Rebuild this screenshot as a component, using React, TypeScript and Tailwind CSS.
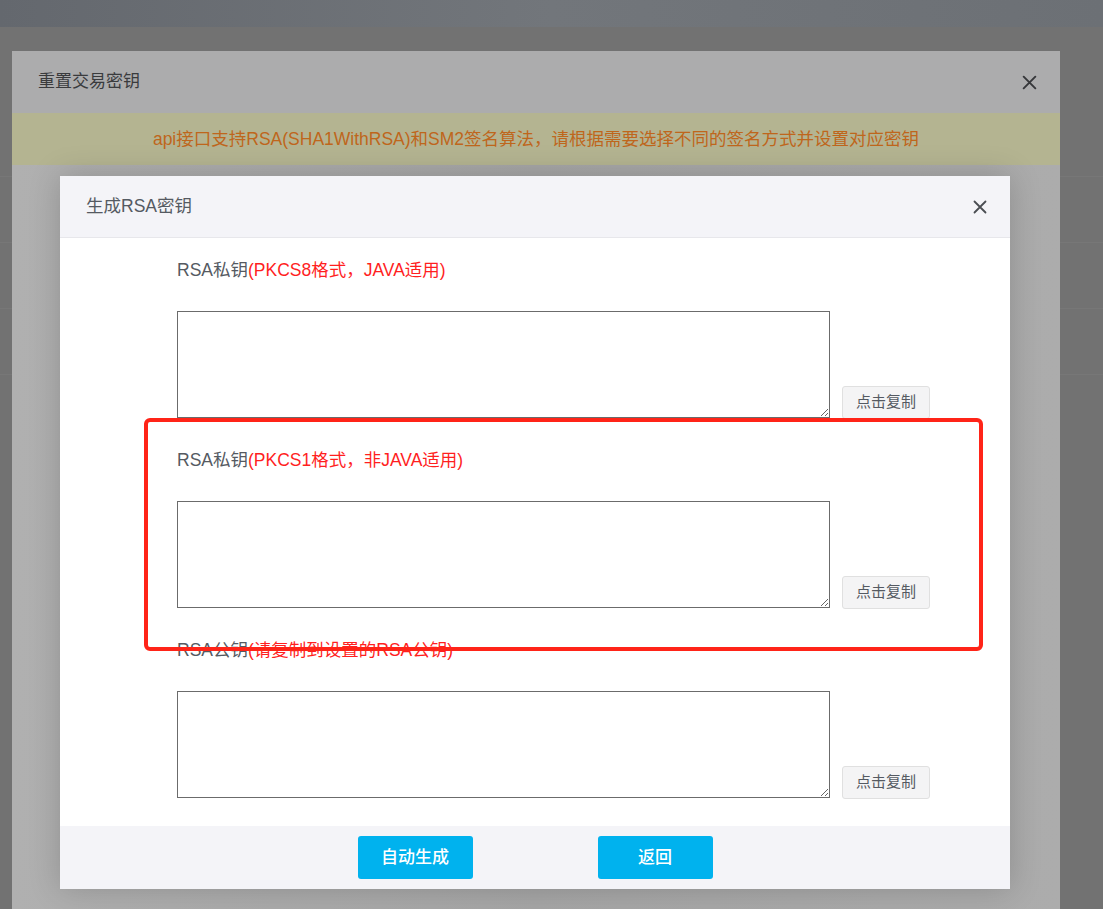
import React from "react";

const FONT = { fontFamily: '"Liberation Sans", "Noto Sans CJK SC", sans-serif' };

function CloseIcon({ className }: { className?: string }) {
  return (
    <svg viewBox="0 0 16 16" className={className} fill="none" stroke="currentColor" strokeWidth="1.8" strokeLinecap="round">
      <path d="M2.5 2.5l11 11M13.5 2.5l-11 11" />
    </svg>
  );
}

interface KeySectionProps {
  label: string;
  hint: string;
  first?: boolean;
}

function KeySection({ label, hint, first }: KeySectionProps) {
  return (
    <div className={first ? "" : "mt-[30px]"}>
      <div className="h-[24px] text-[17.5px] leading-[24px] text-[#555a62]">
        {label}
        <span className="text-[#ff1f1f]">{hint}</span>
      </div>
      <div className="mt-[29px] flex items-end gap-[12px]">
        <textarea className="block h-[107px] w-[653px] border border-[#6b6b6b] bg-white outline-none" />
        <button className="mb-[-1px] h-[33px] w-[88px] rounded-[3px] border border-[#e0e0e0] bg-[#f4f4f5] text-[15px] text-[#555a62]">
          点击复制
        </button>
      </div>
    </div>
  );
}

export default function App() {
  return (
    <div className="relative h-[909px] w-[1103px] overflow-hidden bg-[#727272]" style={FONT}>
      {/* page behind the mask */}
      <div className="h-[27px] bg-gradient-to-r from-[#64686e] via-[#72767b] to-[#6c7075]" />
      <div className="flex flex-col">
        <div className="h-[150px] border-b border-[#777777]" />
        <div className="h-[66px] border-b border-[#777777]" />
        <div className="h-[66px] border-b border-[#777777]" />
        <div className="h-[66px] border-b border-[#777777]" />
      </div>

      {/* outer dialog (dimmed) */}
      <div className="absolute left-[12px] top-[51px] flex h-[880px] w-[1048px] flex-col bg-gradient-to-b from-[#acacad] to-[#a4a4a4]">
        <div className="flex h-[62px] shrink-0 items-center justify-between bg-[#acacad] pl-[26px] pr-[22px]">
          <span className="text-[17px] text-[#3a3b3d]">重置交易密钥</span>
          <CloseIcon className="h-[17px] w-[17px] text-[#36373a]" />
        </div>
        <div className="flex h-[52px] shrink-0 items-center justify-center bg-[#b4b491] text-[17.5px] text-[#bf661c]">
          api接口支持RSA(SHA1WithRSA)和SM2签名算法，请根据需要选择不同的签名方式并设置对应密钥
        </div>
        <div className="flex-1 bg-gradient-to-r from-[#b0b0b0] via-[#a6a6a6] to-[#acacac]" />
      </div>

      {/* inner dialog */}
      <div className="absolute left-[60px] top-[176px] w-[950px] shadow-[0_0_30px_rgba(0,0,0,0.18)]">
        <div className="flex h-[62px] items-center justify-between border-b border-[#e7e7eb] bg-[#f4f4f8] pl-[26px] pr-[22px]">
          <span className="text-[17.5px] text-[#555a62]">生成RSA密钥</span>
          <CloseIcon className="h-[16px] w-[16px] text-[#4a4d52]" />
        </div>
        <div className="bg-white pb-[28px] pl-[117px] pt-[20px]">
          <KeySection first label="RSA私钥" hint="(PKCS8格式，JAVA适用)" />
          <KeySection label="RSA私钥" hint="(PKCS1格式，非JAVA适用)" />
          <KeySection label="RSA公钥" hint="(请复制到设置的RSA公钥)" />
        </div>
        <div className="flex h-[63px] items-center justify-center gap-[125px] bg-[#f4f4f8]">
          <button className="h-[43px] w-[115px] rounded-[3px] bg-[#00b2ee] text-[17px] font-medium text-white">自动生成</button>
          <button className="h-[43px] w-[115px] rounded-[3px] bg-[#00b2ee] text-[17px] font-medium text-white">返回</button>
        </div>
      </div>

      {/* red annotation box */}
      <div className="pointer-events-none absolute left-[144px] top-[418px] h-[233px] w-[839px] rounded-[6px] border-[4px] border-[#ff2418]" />
    </div>
  );
}
